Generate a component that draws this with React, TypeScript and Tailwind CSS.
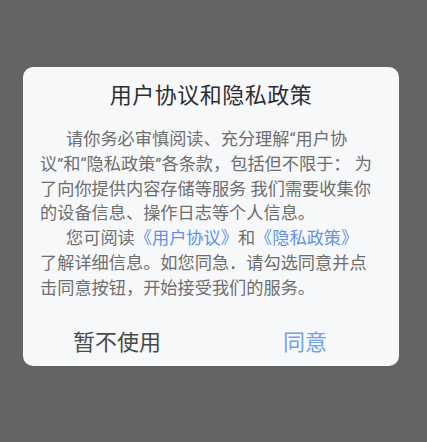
export default function App() {
  const font = { fontFamily: '"Roboto", "Noto Sans CJK SC", sans-serif' };

  return (
    <div className="w-full h-[442px] bg-[#646464] pt-[67px] pl-[23px]" style={font}>
      <div className="w-[376px] h-[299px] rounded-[10px] bg-[#f7f8fa] flex flex-col">
        {/* Title */}
        <h1 className="pt-[13px] text-center text-[22px] leading-[32px] tracking-[0.5px] text-[#2f2f2f]">
          用户协议和隐私政策
        </h1>

        {/* Body */}
        <div className="mt-[15px] px-[17px] text-[17.2px] leading-[24.8px] text-[#6e6e6e] whitespace-nowrap">
          <p className="indent-[26px]">请你务必审慎阅读、充分理解“用户协</p>
          <p>议”和“隐私政策”各条款，包括但不限于： 为</p>
          <p>了向你提供内容存储等服务 我们需要收集你</p>
          <p>的设备信息、操作日志等个人信息。</p>
          <p className="indent-[26px]">
            您可阅读<span className="text-[#5f93e6]">《用户协议》</span>和
            <span className="text-[#5f93e6]">《隐私政策》</span>
          </p>
          <p>了解详细信息。如您同急．请勾选同意并点</p>
          <p>击同意按钮，开始接受我们的服务。</p>
        </div>

        {/* Buttons */}
        <div className="mt-auto flex h-[48px]">
          <button className="flex-1 flex items-center justify-center text-[22px] text-[#4a4a4a]">
            暂不使用
          </button>
          <button className="flex-1 flex items-center justify-center text-[22px] text-[#72a2ea]">
            同意
          </button>
        </div>
      </div>
    </div>
  );
}
